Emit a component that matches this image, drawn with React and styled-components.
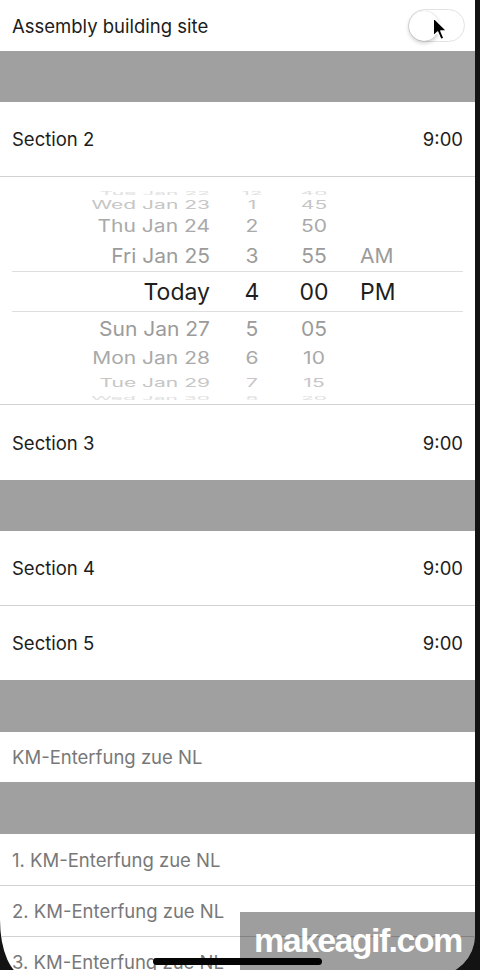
import styled, { createGlobalStyle } from 'styled-components';

const GlobalStyle = createGlobalStyle`
  html, body {
    margin: 0;
    padding: 0;
    background: #131313;
    overflow: hidden;
  }
  body {
    font-family: Inter, "Noto Sans", sans-serif;
  }
`;

const Screen = styled.div`
  position: relative;
  width: 475px;
  height: 976px;
  background: #fff;
  overflow: hidden;
  border-bottom-left-radius: 25px 56px;
  border-bottom-right-radius: 41px;
  display: flex;
  flex-direction: column;
`;

const Row = styled.div`
  flex-shrink: 0;
  box-sizing: border-box;
  height: ${(p) => p.$h}px;
  padding: 0 12px;
  display: flex;
  align-items: center;
  justify-content: space-between;
  border-bottom: ${(p) => (p.$line ? '1px solid #d2d2d2' : 'none')};
  font-size: 18.5px;
  color: ${(p) => (p.$muted ? '#787878' : '#1c1c1c')};
`;

const Band = styled.div`
  flex-shrink: 0;
  height: ${(p) => p.$h}px;
  background: #a0a0a0;
`;

const Switch = styled.div`
  box-sizing: border-box;
  width: 57px;
  height: 33px;
  margin-right: -2px;
  border-radius: 17px;
  border: 1.5px solid #e3e3e3;
  background: #fff;
  display: flex;
  align-items: center;
`;

const Knob = styled.div`
  width: 30px;
  height: 30px;
  border-radius: 50%;
  background: #fff;
  box-shadow: 0 2px 4px rgba(0, 0, 0, 0.22), 0 0 1px rgba(0, 0, 0, 0.2);
`;

const Picker = styled.div`
  flex-shrink: 0;
  box-sizing: border-box;
  height: 228px;
  padding-top: 6px;
  border-bottom: 1px solid #d2d2d2;
  display: flex;
  flex-direction: column;
`;

const WheelRow = styled.div`
  flex-shrink: 0;
  box-sizing: border-box;
  height: ${(p) => p.$h}px;
  margin: 0 12px;
  display: grid;
  grid-template-columns: 198px 84px 40px 1fr;
  align-items: center;
  color: ${(p) => p.$color};
  font-size: ${(p) => (p.$selected ? 23 : 21)}px;
  border-top: ${(p) => (p.$selected ? '1px solid #dedede' : 'none')};
  border-bottom: ${(p) => (p.$selected ? '1px solid #dedede' : 'none')};
`;

const Cell = styled.span`
  display: block;
  text-align: ${(p) => p.$align};
  padding-left: ${(p) => p.$pl || 0}px;
  line-height: 1;
  white-space: nowrap;
  transform: translateY(${(p) => p.$dy}px) scaleY(${(p) => p.$s});
`;

const Cursor = styled.svg`
  position: absolute;
  left: 432px;
  top: 16px;
`;

const HomeBar = styled.div`
  position: absolute;
  left: 153px;
  top: 958px;
  width: 169px;
  height: 7px;
  border-radius: 4px;
  background: #050505;
`;

const Watermark = styled.div`
  position: absolute;
  left: 240px;
  top: 912px;
  right: 0;
  bottom: 0;
  box-sizing: border-box;
  padding: 11px 0 0 14px;
  background: rgba(0, 0, 0, 0.38);
  color: #fff;
  font-family: "Liberation Sans", Arial, sans-serif;
  font-weight: 700;
  font-size: 34px;
  line-height: 34px;
  letter-spacing: -1.6px;
`;

const wheel = [
  { h: 10, s: 0.25, dy: 0, c: '#e0e0e0', d: 'Tue Jan 22', hr: '12', m: '40' },
  { h: 18, s: 0.55, dy: 1, c: '#c6c6c6', d: 'Wed Jan 23', hr: '1', m: '45' },
  { h: 25, s: 0.8, dy: 2, c: '#a9a9a9', d: 'Thu Jan 24', hr: '2', m: '50' },
  { h: 35, s: 0.95, dy: 2.5, c: '#9b9b9b', d: 'Fri Jan 25', hr: '3', m: '55', ap: 'AM' },
  { h: 41, s: 1, dy: 1, c: '#1e1e1e', d: 'Today', hr: '4', m: '00', ap: 'PM', sel: true },
  { h: 31, s: 0.95, dy: 1, c: '#9b9b9b', d: 'Sun Jan 27', hr: '5', m: '05' },
  { h: 29, s: 0.8, dy: 0.5, c: '#a9a9a9', d: 'Mon Jan 28', hr: '6', m: '10' },
  { h: 16, s: 0.55, dy: 0, c: '#c6c6c6', d: 'Tue Jan 29', hr: '7', m: '15' },
  { h: 10, s: 0.25, dy: 0, c: '#e0e0e0', d: 'Wed Jan 30', hr: '8', m: '20' },
];

function DatePicker() {
  return (
    <Picker>
      {wheel.map((r) => (
        <WheelRow key={r.d} $h={r.h} $color={r.c} $selected={r.sel}>
          <Cell $align="right" $s={r.s} $dy={r.dy}>{r.d}</Cell>
          <Cell $align="center" $s={r.s} $dy={r.dy}>{r.hr}</Cell>
          <Cell $align="center" $s={r.s} $dy={r.dy}>{r.m}</Cell>
          <Cell $align="left" $pl={26} $s={r.s} $dy={r.dy}>{r.ap || ''}</Cell>
        </WheelRow>
      ))}
    </Picker>
  );
}

export default function App() {
  return (
    <>
      <GlobalStyle />
      <Screen>
        <Row $h={51}>
          <span>Assembly building site</span>
          <Switch>
            <Knob />
          </Switch>
        </Row>
        <Band $h={51} />
        <Row $h={75} $line>
          <span>Section 2</span>
          <span>9:00</span>
        </Row>
        <DatePicker />
        <Row $h={75}>
          <span>Section 3</span>
          <span>9:00</span>
        </Row>
        <Band $h={51} />
        <Row $h={75} $line>
          <span>Section 4</span>
          <span>9:00</span>
        </Row>
        <Row $h={74}>
          <span>Section 5</span>
          <span>9:00</span>
        </Row>
        <Band $h={52} />
        <Row $h={50} $muted>
          <span>KM-Enterfung zue NL</span>
        </Row>
        <Band $h={52} />
        <Row $h={52} $muted $line>
          <span>1. KM-Enterfung zue NL</span>
        </Row>
        <Row $h={51} $muted $line>
          <span>2. KM-Enterfung zue NL</span>
        </Row>
        <Row $h={50} $muted>
          <span>3. KM-Enterfung zue NL</span>
        </Row>

        <Cursor width="18" height="26" viewBox="0 0 14 20">
          <path
            d="M1 1 L1 15.5 L4.4 12.3 L6.9 18.2 L9.3 17.2 L6.9 11.5 L11.6 11.5 Z"
            fill="#000"
            stroke="#fff"
            strokeWidth="1.1"
            strokeLinejoin="round"
          />
        </Cursor>
        <HomeBar />
        <Watermark>makeagif.com</Watermark>
      </Screen>
    </>
  );
}
